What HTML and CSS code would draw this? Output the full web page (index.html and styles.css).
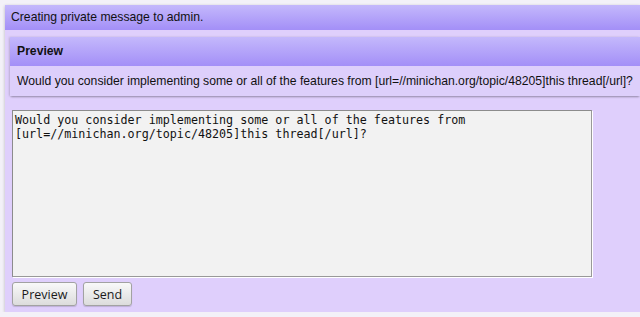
FILE: index.html
```html
<!DOCTYPE html>
<html>
<head>
<meta charset="utf-8">
<link rel="stylesheet" href="styles.css">
</head>
<body>
<div class="box">
  <div class="box-head">Creating private message to admin.</div>
  <div class="box-body">
    <div class="preview">
      <div class="preview-head">Preview</div>
      <div class="preview-body">Would you consider implementing some or all of the features from [url=//minichan.org/topic/48205]this thread[/url]?</div>
    </div>
    <form class="compose">
      <textarea class="editor">Would you consider implementing some or all of the features from [url=//minichan.org/topic/48205]this thread[/url]?</textarea>
      <div class="actions">
        <button type="button" class="btn btn-preview">Preview</button>
        <button type="button" class="btn btn-send">Send</button>
      </div>
    </form>
  </div>
</div>
</body>
</html>
```
FILE: styles.css
```css
html, body {
  margin: 0;
  padding: 0;
}
body {
  padding: 5px 0 0 5px;
  background: #f3f1f8;
  font-family: "Liberation Sans", Arial, sans-serif;
  font-size: 12.2px;
  color: #111;
}
.box {
  background: #dfcffc;
  box-shadow: 0 1px 3px rgba(0, 0, 0, 0.25);
}
.box-head {
  height: 25px;
  line-height: 25px;
  padding-left: 6px;
  background: linear-gradient(#c4b8fc, #a38ff7);
}
.box-body {
  padding: 7px 0 6px 5px;
}
.preview {
  background: #ddcffb;
  box-shadow: 0 2px 2px -1px rgba(0, 0, 0, 0.3), -1px 0 2px rgba(0, 0, 0, 0.15);
}
.preview-head {
  height: 29px;
  line-height: 29px;
  padding-left: 7px;
  font-weight: bold;
  background: linear-gradient(#c4b8fc, #a38ff7);
}
.preview-body {
  height: 30px;
  line-height: 30px;
  padding-left: 7px;
  white-space: nowrap;
  overflow: hidden;
}
.compose {
  margin: 14px 0 0 2px;
}
.editor {
  display: block;
  box-sizing: border-box;
  width: 580px;
  height: 167px;
  margin: 0;
  padding: 2px 2px;
  border: 1px solid #8c8c8c;
  border-right-color: #999;
  border-bottom-color: #999;
  box-shadow: 1px 1px 0 #fff;
  background: #f2f2f2;
  font-family: "DejaVu Sans Mono", monospace;
  font-size: 11.7px;
  line-height: 14px;
  color: #111;
  resize: none;
}
.actions {
  display: flex;
  gap: 6px;
  margin-top: 5px;
}
.btn {
  box-sizing: border-box;
  height: 24px;
  padding: 0;
  border: 1px solid #a2a2a2;
  border-radius: 3px;
  background: linear-gradient(#f9f9f9, #dcdcdc);
  box-shadow: 0 1px 1px rgba(0, 0, 0, 0.15);
  font-family: "Open Sans", sans-serif;
  font-size: 12.5px;
  color: #1a1a1a;
}
.btn-preview {
  width: 65px;
}
.btn-send {
  width: 49px;
}
```
